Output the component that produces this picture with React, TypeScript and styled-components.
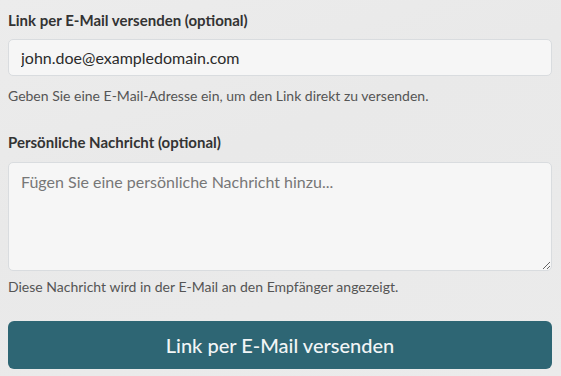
import React, { useState } from "react";
import styled, { createGlobalStyle } from "styled-components";

const GlobalStyle = createGlobalStyle`
  html, body {
    margin: 0;
    padding: 0;
    background: #ebebeb;
  }
  body {
    font-family: Lato, "Noto Sans", "Liberation Sans", sans-serif;
  }
`;

function App() {
  const [email, setEmail] = useState("john.doe@exampledomain.com");
  const [message, setMessage] = useState("");
  return (
    <Page>
      <GlobalStyle />
      <Form onSubmit={e => e.preventDefault()}>
        <Field $gapAfter={25}>
          <Label htmlFor="email" $space={8}>
            Link per E-Mail versenden (optional)
          </Label>
          <Input
            id="email"
            type="email"
            value={email}
            onChange={e => setEmail(e.target.value)}
          />
          <Hint $space={10}>
            Geben Sie eine E-Mail-Adresse ein, um den Link direkt zu versenden.
          </Hint>
        </Field>
        <Field $gapAfter={24}>
          <Label htmlFor="message" $space={9}>
            Persönliche Nachricht (optional)
          </Label>
          <TextArea
            id="message"
            placeholder="Fügen Sie eine persönliche Nachricht hinzu..."
            value={message}
            onChange={e => setMessage(e.target.value)}
          />
          <Hint $space={6}>
            Diese Nachricht wird in der E-Mail an den Empfänger angezeigt.
          </Hint>
        </Field>
        <SubmitButton type="submit">Link per E-Mail versenden</SubmitButton>
      </Form>
    </Page>
  );
}

const Page = styled.div`
  min-height: 376px;
  box-sizing: border-box;
  padding: 9px 9px 0 8px;
  background: linear-gradient(160deg, #ececec 0%, #e9e9e9 40%, #ebebeb 100%);
`;

const Form = styled.form`
  display: flex;
  flex-direction: column;
`;

const Field = styled.div<{ $gapAfter: number }>`
  display: flex;
  flex-direction: column;
  margin-bottom: ${p => p.$gapAfter}px;
`;

const Label = styled.label<{ $space: number }>`
  font-size: 15px;
  line-height: 22px;
  font-weight: 700;
  color: #333;
  margin-bottom: ${p => p.$space}px;
`;

const Input = styled.input`
  box-sizing: border-box;
  height: 37px;
  padding: 0 12px;
  font-family: inherit;
  font-size: 16px;
  color: #2b2b2b;
  background: rgba(248, 248, 248, 0.85);
  border: 1px solid #d9dcdf;
  border-radius: 5px;
  outline: none;
`;

const TextArea = styled.textarea`
  display: block;
  box-sizing: border-box;
  height: 109px;
  padding: 7px 12px;
  font-family: inherit;
  font-size: 16px;
  line-height: 24px;
  color: #2b2b2b;
  background: rgba(248, 248, 248, 0.85);
  border: 1px solid #d9dcdf;
  border-radius: 5px;
  outline: none;
  resize: vertical;

  &::placeholder {
    color: #777;
  }
`;

const Hint = styled.p<{ $space: number }>`
  margin: ${p => p.$space}px 0 0;
  font-size: 14px;
  line-height: 20px;
  color: #555;
`;

const SubmitButton = styled.button`
  height: 48px;
  border: none;
  border-radius: 6px;
  background: #2e6674;
  color: #f2f5f6;
  font-family: inherit;
  font-size: 20px;
  font-weight: 500;
  cursor: pointer;
`;

export default App;
